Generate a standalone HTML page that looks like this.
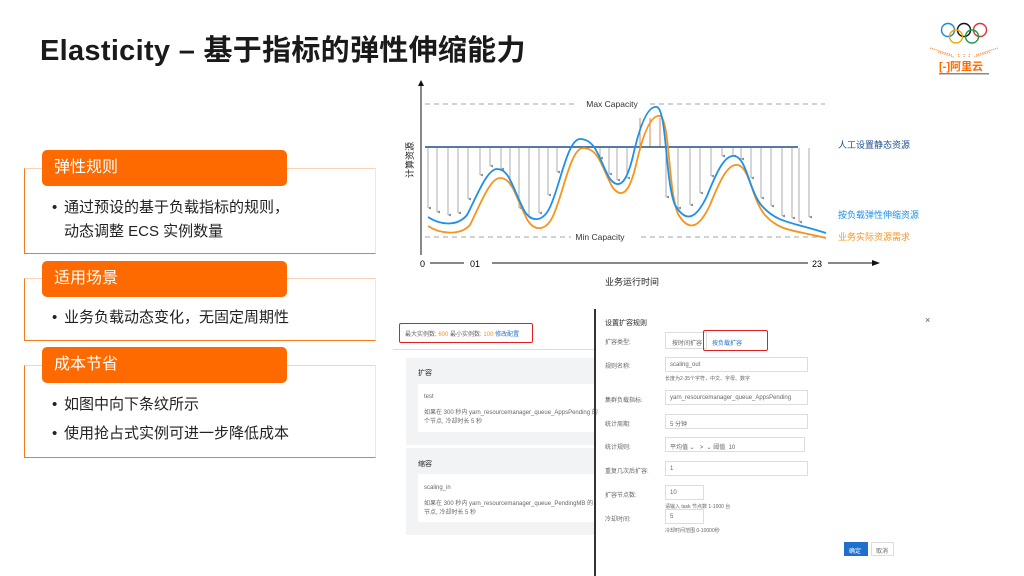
<!DOCTYPE html>
<html><head><meta charset="utf-8"><style>
*{margin:0;padding:0;box-sizing:border-box}
body{width:1024px;height:576px;background:#fff;position:relative;overflow:hidden;font-family:"Liberation Sans","Noto Sans CJK SC",sans-serif;color:#222}
.a{position:absolute}
.title{left:40px;top:27px;font-size:29px;font-weight:bold;color:#1a1a1a;letter-spacing:0.3px;white-space:nowrap}
.box{position:absolute;left:24px;width:352px;border-left:1.5px solid #f57a1f;border-bottom:1.5px solid #f57a1f;border-top:1px solid #fbd3b4;border-right:1px solid #fde4d2}
.hd{position:absolute;left:42px;width:245px;height:36px;background:#ff6a00;border-radius:5px;color:#fff;font-size:16px;line-height:36px;padding-left:12px}
.li{position:absolute;left:52px;font-size:15px;color:#222;line-height:24px;white-space:nowrap}
.li b{font-weight:normal;display:inline-block;width:12px}
.s{font-size:6px;color:#666;position:absolute;white-space:nowrap}
.fld{position:absolute;border:1px solid #ddd;background:#fff}
</style></head><body>
<div class="a title">Elasticity – 基于指标的弹性伸缩能力</div>

<!-- logo -->
<svg class="a" style="left:924px;top:14px" width="80" height="62" viewBox="0 0 80 62">
<circle cx="24" cy="16" r="6.5" fill="none" stroke="#1a8ad6" stroke-width="1.4"/>
<circle cx="40" cy="16" r="6.5" fill="none" stroke="#111" stroke-width="1.4"/>
<circle cx="56" cy="16" r="6.5" fill="none" stroke="#e0303a" stroke-width="1.4"/>
<circle cx="32" cy="22.5" r="6.5" fill="none" stroke="#f2a900" stroke-width="1.4"/>
<circle cx="48" cy="22.5" r="6.5" fill="none" stroke="#1a9a4a" stroke-width="1.4"/>
<path d="M6 34 L28 41 M14 38 L30 43 M74 34 L52 41 M66 38 L50 43 M35 43 L34 39 M45 43 L46 39 M40 43 L40 39" stroke="#ff6a00" stroke-width="0.9" stroke-dasharray="1 1"/>
<text x="15" y="56" font-size="11" font-weight="bold" fill="#ff6a00" font-family="Liberation Sans,Noto Sans CJK SC,sans-serif">[-]阿里云</text>
<rect x="15" y="59" width="50" height="1.5" fill="#888"/>
</svg>

<!-- left boxes -->
<div class="box" style="top:168px;height:86px"></div>
<div class="hd" style="top:150px">弹性规则</div>
<div class="li" style="top:196px"><b>•</b>通过预设的基于负载指标的规则，</div>
<div class="li" style="top:220px"><b></b>动态调整 ECS 实例数量</div>

<div class="box" style="top:278px;height:63px"></div>
<div class="hd" style="top:261px">适用场景</div>
<div class="li" style="top:306px"><b>•</b>业务负载动态变化，无固定周期性</div>

<div class="box" style="top:365px;height:93px"></div>
<div class="hd" style="top:347px">成本节省</div>
<div class="li" style="top:393px"><b>•</b>如图中向下条纹所示</div>
<div class="li" style="top:422px"><b>•</b>使用抢占式实例可进一步降低成本</div>

<!-- chart -->
<svg class="a" style="left:0;top:0" width="1024" height="300" viewBox="0 0 1024 300" font-family="Liberation Sans,Noto Sans CJK SC,sans-serif">
<defs><marker id="ar" markerWidth="4" markerHeight="4" refX="2" refY="4" orient="auto"><path d="M0 0 L4 0 L2 4Z" fill="#777"/></marker></defs>
<line x1="421" y1="84" x2="421" y2="255" stroke="#111" stroke-width="1"/>
<path d="M418 86 L421 80 L424 86Z" fill="#111"/>
<text x="413" y="160" font-size="9" fill="#222" transform="rotate(-90 413 160)" text-anchor="middle">计算资源</text>
<line x1="425" y1="104" x2="825" y2="104" stroke="#888" stroke-dasharray="5 4" stroke-width="0.8"/>
<rect x="577" y="98" width="70" height="11" fill="#fff"/>
<text x="612" y="107" font-size="8.5" fill="#333" text-anchor="middle">Max Capacity</text>
<line x1="425" y1="237" x2="825" y2="237" stroke="#888" stroke-dasharray="5 4" stroke-width="0.8"/>
<rect x="571" y="231" width="70" height="11" fill="#fff"/>
<text x="600" y="240" font-size="8.5" fill="#333" text-anchor="middle">Min Capacity</text>
<g stroke="#888" stroke-width="0.7" marker-end="url(#ar)">
<line x1="428" y1="148" x2="428" y2="208"/><line x1="437" y1="148" x2="437" y2="212"/><line x1="448" y1="148" x2="448" y2="215"/><line x1="458" y1="148" x2="458" y2="213"/><line x1="468" y1="148" x2="468" y2="199"/><line x1="480" y1="148" x2="480" y2="175"/><line x1="490" y1="148" x2="490" y2="166"/><line x1="501" y1="148" x2="501" y2="169"/><line x1="510" y1="148" x2="510" y2="186"/><line x1="519" y1="148" x2="519" y2="208"/><line x1="529" y1="148" x2="529" y2="218"/><line x1="539" y1="148" x2="539" y2="213"/><line x1="548" y1="148" x2="548" y2="195"/><line x1="557" y1="148" x2="557" y2="172"/><line x1="600" y1="148" x2="600" y2="158"/><line x1="609" y1="148" x2="609" y2="174"/><line x1="617" y1="148" x2="617" y2="180"/><line x1="627" y1="148" x2="627" y2="178"/><line x1="666" y1="148" x2="666" y2="197"/><line x1="678" y1="148" x2="678" y2="208"/><line x1="690" y1="148" x2="690" y2="205"/><line x1="700" y1="148" x2="700" y2="193"/><line x1="711" y1="148" x2="711" y2="176"/><line x1="722" y1="148" x2="722" y2="156"/><line x1="733" y1="148" x2="733" y2="156"/><line x1="741" y1="148" x2="741" y2="159"/><line x1="751" y1="148" x2="751" y2="178"/><line x1="761" y1="148" x2="761" y2="198"/><line x1="771" y1="148" x2="771" y2="206"/><line x1="782" y1="148" x2="782" y2="216"/><line x1="792" y1="148" x2="792" y2="218"/><line x1="799" y1="148" x2="799" y2="222"/><line x1="809" y1="148" x2="809" y2="217"/>
</g>
<g stroke="#d0662a" stroke-width="0.8"><line x1="640" y1="147" x2="640" y2="118"/><line x1="650" y1="147" x2="650" y2="118"/><line x1="660" y1="147" x2="660" y2="118"/></g>
<line x1="425" y1="147" x2="798" y2="147" stroke="#1f4e8c" stroke-width="1.6"/>
<path d="M428 226 C440 234 460 236 470 225 C480 205 490 178 500 178 C512 178 515 195 525 215 C532 232 545 232 552 218 C562 200 570 148 583 148 C600 148 603 172 613 188 C623 200 630 190 636 165 C642 138 650 114 660 116 C670 120 668 190 678 214 C690 234 700 226 710 205 C720 180 728 163 738 165 C750 168 752 200 765 215 C780 232 795 230 826 238" fill="none" stroke="#f7941d" stroke-width="1.8"/>
<path d="M428 217 C440 225 457 227 467 215 C477 196 487 169 497 169 C509 169 512 186 522 206 C529 223 542 223 549 209 C559 191 567 139 580 139 C597 139 600 163 610 179 C620 191 627 181 633 156 C639 129 647 105 657 107 C667 111 665 181 675 205 C687 225 697 217 707 196 C717 171 725 154 735 156 C747 159 749 191 762 206 C777 223 792 222 826 233" fill="none" stroke="#1e90e6" stroke-width="1.8"/>
<line x1="424" y1="263" x2="876" y2="263" stroke="#111" stroke-width="1"/>
<path d="M872 260 L880 263 L872 266Z" fill="#111"/>
<rect x="414" y="257" width="16" height="12" fill="#fff"/><text x="420" y="267" font-size="9">0</text>
<rect x="464" y="257" width="28" height="12" fill="#fff"/><text x="470" y="267" font-size="9">01</text>
<rect x="808" y="257" width="20" height="12" fill="#fff"/><text x="812" y="267" font-size="9">23</text>
<text x="632" y="285" font-size="9" fill="#222" text-anchor="middle">业务运行时间</text>
<text x="838" y="148" font-size="9" fill="#1f4e8c">人工设置静态资源</text>
<text x="838" y="218" font-size="9" fill="#1e90e6">按负载弹性伸缩资源</text>
<text x="838" y="240" font-size="9" fill="#f7941d">业务实际资源需求</text>
</svg>

<!-- bottom screenshot -->
<div class="a" style="left:399px;top:323px;width:134px;height:20px;border:1.5px solid #e02020;border-radius:2px"></div>
<div class="s" style="left:405px;top:329px">最大实例数: <span style="color:#f7941d">600</span> 最小实例数: <span style="color:#f7941d">100</span> <span style="color:#1e70cc">修改配置</span></div>
<div class="a" style="left:393px;top:349px;width:202px;height:1px;background:#ddd"></div>
<div class="a" style="left:406px;top:358px;width:189px;height:87px;background:#f2f3f5"></div>
<div class="a" style="left:418px;top:384px;width:177px;height:48px;background:#fff"></div>
<div class="s" style="left:418px;top:368px;font-size:7px;color:#222">扩容</div>
<div class="s" style="left:424px;top:394px">test</div>
<div class="s" style="left:424px;top:407px">如果在 300 秒内 yarn_resourcemanager_queue_AppsPending 的</div>
<div class="s" style="left:424px;top:416px">个节点, 冷却时长 5 秒</div>
<div class="a" style="left:406px;top:448px;width:189px;height:87px;background:#f2f3f5"></div>
<div class="a" style="left:418px;top:474px;width:177px;height:48px;background:#fff"></div>
<div class="s" style="left:418px;top:459px;font-size:7px;color:#222">缩容</div>
<div class="s" style="left:424px;top:485px">scaling_in</div>
<div class="s" style="left:424px;top:498px">如果在 300 秒内 yarn_resourcemanager_queue_PendingMB 的</div>
<div class="s" style="left:424px;top:507px">节点, 冷却时长 5 秒</div>
<div class="a" style="left:594px;top:309px;width:1.5px;height:267px;background:#333"></div>

<div class="s" style="left:605px;top:318px;font-size:7px;color:#222">设置扩容规则</div>
<div class="s" style="left:925px;top:315px;font-size:9px;color:#555">×</div>
<div class="s" style="left:605px;top:337px">扩容类型:</div>
<div class="fld" style="left:665px;top:332px;width:42px;height:17px"></div>
<div class="s" style="left:672px;top:338px">按时间扩容</div>
<div class="a" style="left:703px;top:330px;width:65px;height:21px;border:1.5px solid #e02020;border-radius:2px"></div>
<div class="s" style="left:712px;top:338px;color:#1e70cc">按负载扩容</div>
<div class="s" style="left:605px;top:361px">规则名称:</div>
<div class="fld" style="left:665px;top:357px;width:143px;height:15px"></div>
<div class="s" style="left:670px;top:362px">scaling_out</div>
<div class="s" style="left:665px;top:375px;font-size:5px">长度为2-35个字符，中文、字母、数字</div>
<div class="s" style="left:605px;top:395px">集群负载指标:</div>
<div class="fld" style="left:665px;top:390px;width:143px;height:15px"></div>
<div class="s" style="left:670px;top:395px">yarn_resourcemanager_queue_AppsPending</div>
<div class="s" style="left:605px;top:419px">统计周期:</div>
<div class="fld" style="left:665px;top:414px;width:143px;height:15px"></div>
<div class="s" style="left:670px;top:419px">5 分钟</div>
<div class="s" style="left:605px;top:442px">统计规则:</div>
<div class="fld" style="left:665px;top:437px;width:140px;height:15px"></div>
<div class="s" style="left:670px;top:442px">平均值 ⌄ &nbsp; &gt; &nbsp;⌄ 阈值 &nbsp;10</div>
<div class="s" style="left:605px;top:466px">重复几次后扩容:</div>
<div class="fld" style="left:665px;top:461px;width:143px;height:15px"></div>
<div class="s" style="left:670px;top:466px">1</div>
<div class="s" style="left:605px;top:490px">扩容节点数:</div>
<div class="fld" style="left:665px;top:485px;width:39px;height:15px"></div>
<div class="s" style="left:670px;top:490px">10</div>
<div class="s" style="left:665px;top:503px;font-size:5px">请输入 task 节点数 1-1000 台</div>
<div class="s" style="left:605px;top:514px">冷却时间:</div>
<div class="fld" style="left:665px;top:509px;width:39px;height:15px"></div>
<div class="s" style="left:670px;top:514px">5</div>
<div class="s" style="left:665px;top:527px;font-size:5px">冷却时间范围 0-10000秒</div>
<div class="a" style="left:844px;top:542px;width:24px;height:14px;background:#1e70cc"></div>
<div class="s" style="left:849px;top:546px;color:#fff">确定</div>
<div class="a" style="left:871px;top:542px;width:23px;height:14px;border:1px solid #ddd"></div>
<div class="s" style="left:876px;top:546px">取消</div>
</body></html>
